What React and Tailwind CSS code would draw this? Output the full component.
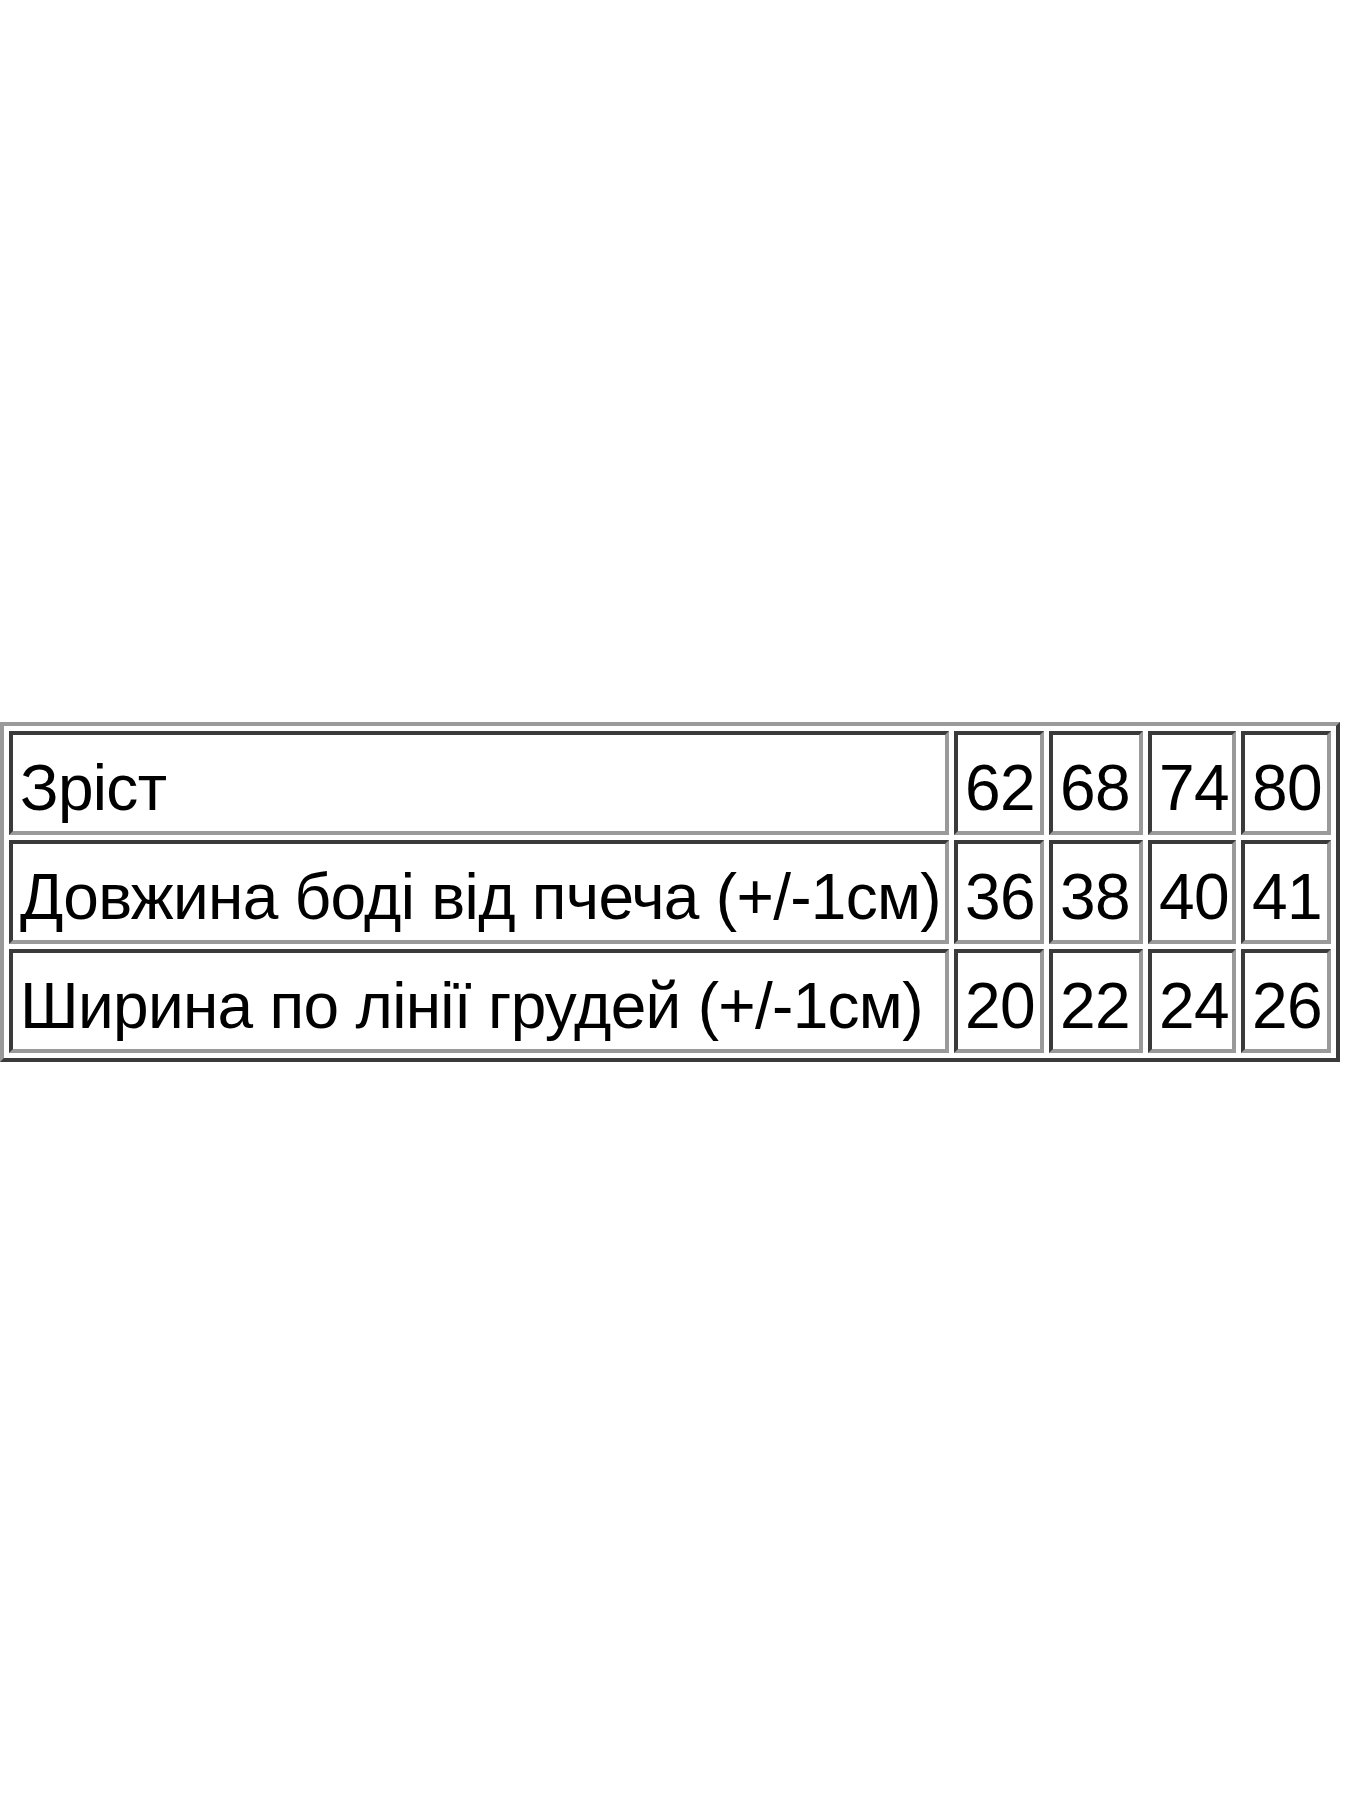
const rows = [
  { label: "Зріст", values: ["62", "68", "74", "80"] },
  { label: "Довжина боді від пчеча (+/-1см)", values: ["36", "38", "40", "41"] },
  { label: "Ширина по лінії грудей (+/-1см)", values: ["20", "22", "24", "26"] },
];

const cellClass =
  "h-[104px] border-4 border-t-[#3a3a3a] border-l-[#3a3a3a] border-b-[#9a9a9a] border-r-[#9a9a9a] pl-[7px] pt-[10px] flex items-center whitespace-nowrap overflow-hidden";

export default function App() {
  return (
    <div className="min-h-[1800px] w-[1350px] bg-white pt-[722px] font-['Liberation_Sans',Arial,sans-serif] text-[64px] leading-none tracking-[-0.7px] text-black">
      <div className="w-[1340px] border-4 border-t-[#9a9a9a] border-l-[#9a9a9a] border-b-[#3a3a3a] border-r-[#3a3a3a] p-[5px]">
        <div className="grid grid-cols-[940px_90px_94px_88px_90px] gap-[5px]">
          {rows.map((row) => [
            <div key={row.label} className={cellClass + " pl-[5px]"}>
              {row.label}
            </div>,
            ...row.values.map((v, i) => (
              <div key={row.label + i} className={cellClass}>
                {v}
              </div>
            )),
          ])}
        </div>
      </div>
    </div>
  );
}
